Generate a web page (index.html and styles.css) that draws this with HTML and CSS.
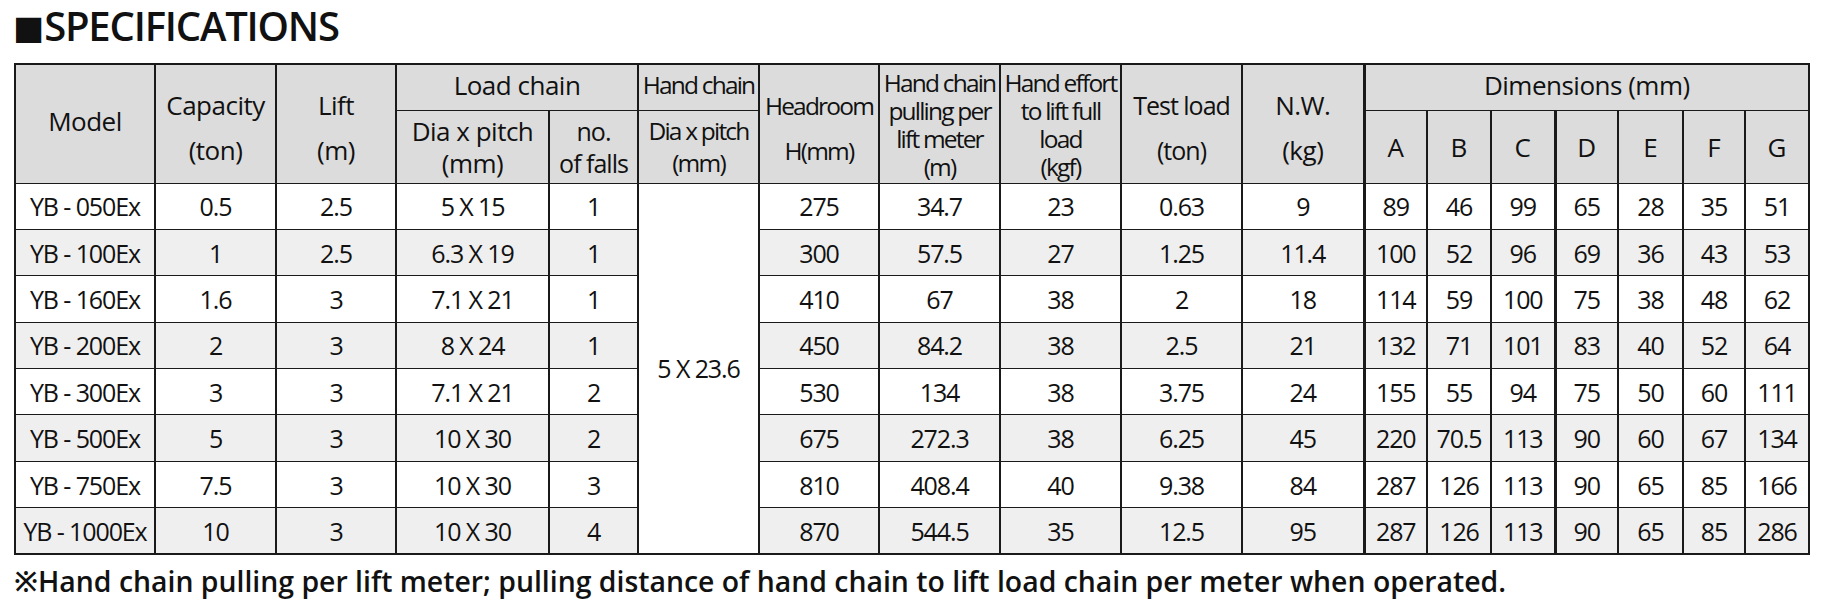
FILE: index.html
```html
<!DOCTYPE html>
<html lang="en">
<head>
<meta charset="utf-8">
<title>Specifications</title>
<link rel="stylesheet" href="styles.css">
</head>
<body>
<div class="page">
  <h1 class="title"><span class="sq">■</span>SPECIFICATIONS</h1>
  <table class="spec">
    <colgroup>
      <col style="width:140px"><col style="width:121px"><col style="width:120px"><col style="width:153px"><col style="width:89px"><col style="width:121px"><col style="width:120px"><col style="width:121px"><col style="width:121px"><col style="width:121px"><col style="width:122px"><col style="width:63px"><col style="width:64px"><col style="width:64px"><col style="width:63px"><col style="width:65px"><col style="width:62px"><col style="width:64px">
    </colgroup>
    <thead>
      <tr class="h1">
        <th rowspan="2" class="one lg">Model</th>
        <th rowspan="2" class="two lg">Capacity<br>(ton)</th>
        <th rowspan="2" class="two lg">Lift<br>(m)</th>
        <th colspan="2" class="top lg">Load chain</th>
        <th class="top sm">Hand chain</th>
        <th rowspan="2" class="two sm">Headroom<br>H(mm)</th>
        <th rowspan="2" class="four sm">Hand chain<br>pulling per<br>lift meter<br>(m)</th>
        <th rowspan="2" class="four sm">Hand effort<br>to lift full<br>load<br>(kgf)</th>
        <th rowspan="2" class="two md">Test load<br>(ton)</th>
        <th rowspan="2" class="two lg nw">N.W.<br>(kg)</th>
        <th colspan="7" class="top dimh lg">Dimensions (mm)</th>
      </tr>
      <tr class="h2">
        <th class="sub lg">Dia x pitch<br>(mm)</th>
        <th class="sub md">no.<br>of falls</th>
        <th class="sub sm">Dia x pitch<br>(mm)</th>
        <th class="dim">A</th><th class="dim">B</th><th class="dim">C</th><th class="dim thick">D</th><th class="dim">E</th><th class="dim">F</th><th class="dim">G</th>
      </tr>
    </thead>
    <tbody>
      <tr><td>YB - 050Ex</td><td>0.5</td><td>2.5</td><td>5 X 15</td><td>1</td><td rowspan="8" class="hand">5 X 23.6</td><td>275</td><td>34.7</td><td>23</td><td>0.63</td><td class="nw">9</td><td>89</td><td>46</td><td>99</td><td class="thick">65</td><td>28</td><td>35</td><td>51</td></tr>
      <tr><td>YB - 100Ex</td><td>1</td><td>2.5</td><td>6.3 X 19</td><td>1</td><td>300</td><td>57.5</td><td>27</td><td>1.25</td><td class="nw">11.4</td><td>100</td><td>52</td><td>96</td><td class="thick">69</td><td>36</td><td>43</td><td>53</td></tr>
      <tr><td>YB - 160Ex</td><td>1.6</td><td>3</td><td>7.1 X 21</td><td>1</td><td>410</td><td>67</td><td>38</td><td>2</td><td class="nw">18</td><td>114</td><td>59</td><td>100</td><td class="thick">75</td><td>38</td><td>48</td><td>62</td></tr>
      <tr><td>YB - 200Ex</td><td>2</td><td>3</td><td>8 X 24</td><td>1</td><td>450</td><td>84.2</td><td>38</td><td>2.5</td><td class="nw">21</td><td>132</td><td>71</td><td>101</td><td class="thick">83</td><td>40</td><td>52</td><td>64</td></tr>
      <tr><td>YB - 300Ex</td><td>3</td><td>3</td><td>7.1 X 21</td><td>2</td><td>530</td><td>134</td><td>38</td><td>3.75</td><td class="nw">24</td><td>155</td><td>55</td><td>94</td><td class="thick">75</td><td>50</td><td>60</td><td>111</td></tr>
      <tr><td>YB - 500Ex</td><td>5</td><td>3</td><td>10 X 30</td><td>2</td><td>675</td><td>272.3</td><td>38</td><td>6.25</td><td class="nw">45</td><td>220</td><td>70.5</td><td>113</td><td class="thick">90</td><td>60</td><td>67</td><td>134</td></tr>
      <tr><td>YB - 750Ex</td><td>7.5</td><td>3</td><td>10 X 30</td><td>3</td><td>810</td><td>408.4</td><td>40</td><td>9.38</td><td class="nw">84</td><td>287</td><td>126</td><td>113</td><td class="thick">90</td><td>65</td><td>85</td><td>166</td></tr>
      <tr><td>YB - 1000Ex</td><td>10</td><td>3</td><td>10 X 30</td><td>4</td><td>870</td><td>544.5</td><td>35</td><td>12.5</td><td class="nw">95</td><td>287</td><td>126</td><td>113</td><td class="thick">90</td><td>65</td><td>85</td><td>286</td></tr>
    </tbody>
  </table>
  <p class="note">※Hand chain pulling per lift meter; pulling distance of hand chain to lift load chain per meter when operated.</p>
</div>
</body>
</html>
```
FILE: styles.css
```css
html, body {
  margin: 0;
  padding: 0;
  background: #ffffff;
}
.page {
  padding: 0 0 0 14px;
  font-family: "Open Sans", "Noto Sans", sans-serif;
  color: #111111;
}
.title {
  margin: 0 0 11px 0;
  font-size: 40px;
  line-height: 52px;
  font-weight: 600;
  font-stretch: 90%;
  letter-spacing: -1.2px;
  color: #111111;
  display: flex;
  align-items: center;
}
.title .sq {
  display: inline-block;
  font-family: "DejaVu Sans", sans-serif;
  font-size: 33px;
  line-height: 1;
  margin-right: 0;
  margin-left: -1px;
  letter-spacing: 0;
  font-stretch: 100%;
  position: relative;
  top: 1px;
}
.spec {
  border-collapse: collapse;
  table-layout: fixed;
  width: 1794px;
  border: 2px solid #1a1a1a;
  font-size: 25px;
  font-stretch: 90%;
  font-weight: 500;
  letter-spacing: -1.1px;
}
.spec th, .spec td {
  border-left: 2px solid #1a1a1a;
  border-right: 2px solid #1a1a1a;
  border-top: 1px solid #1a1a1a;
  border-bottom: 1px solid #1a1a1a;
  padding: 0;
  text-align: center;
  vertical-align: middle;
  white-space: nowrap;
  overflow: hidden;
}
.spec th {
  background: #dcdcdc;
  font-weight: 500;
}
.spec th.lg { font-size: 26px; font-stretch: 100%; letter-spacing: -0.5px; }
.spec th.md { font-size: 25px; font-stretch: 90%; letter-spacing: -1px; }
.spec th.sm { font-size: 24.5px; font-stretch: 90%; letter-spacing: -1.8px; }
.spec th.dim { font-size: 26px; font-stretch: 100%; letter-spacing: 0; }
.spec tr.h1 { height: 46px; }
.spec tr.h2 { height: 73px; }
.spec tbody tr { height: 46.4px; }
.spec th.top { line-height: 30px; padding-bottom: 4px; }
.spec th.two { line-height: 45px; padding-top: 8px; }
.spec th.one { line-height: 30px; padding-bottom: 6px; }
.spec th.four { line-height: 28px; padding-top: 2px; }
.spec th.sub { line-height: 32px; }
.spec th.dimh { border-left-width: 3px; }
.spec tbody tr:nth-child(even) td { background: #efefef; }
.spec tbody tr:nth-child(odd) td { background: #ffffff; }
.spec td.hand { background: #ffffff !important; }
.spec td.nw, .spec th.nw { border-right-width: 3px; }
.spec td.thick, .spec th.thick { border-left-width: 3px; }
.note {
  margin: 8px 0 0 0;
  font-size: 28.4px;
  line-height: 36px;
  font-weight: 650;
  color: #111111;
}
```
